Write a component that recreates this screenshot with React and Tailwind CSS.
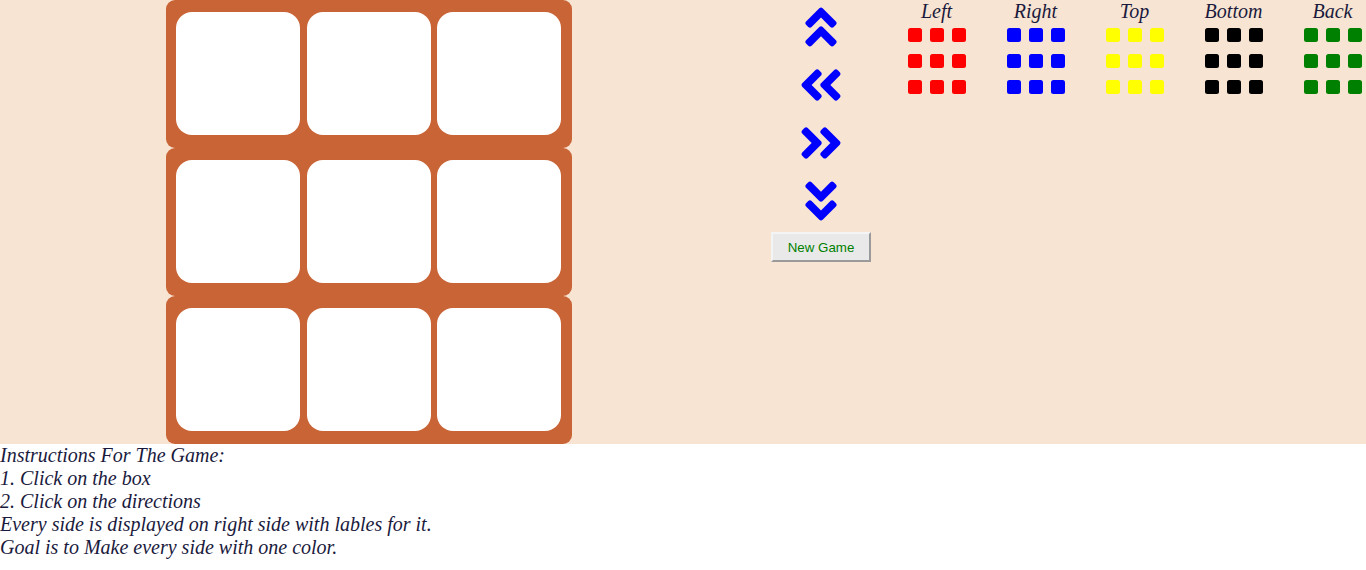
import React from 'react'
import { FaAngleDoubleUp, FaAngleDoubleLeft, FaAngleDoubleRight, FaAngleDoubleDown } from 'react-icons/fa'

const sides = [
  { name: 'Left', color: 'bg-[#ff0000]' },
  { name: 'Right', color: 'bg-[#0000ff]' },
  { name: 'Top', color: 'bg-[#ffff00]' },
  { name: 'Bottom', color: 'bg-[#000000]' },
  { name: 'Back', color: 'bg-[#008000]' },
]

function Row() {
  return (
    <div className="flex h-[148px] w-[406px] items-start gap-[6.5px] rounded-[9px] bg-[#c96436] pl-[10px] pt-[12px]">
      {[0, 1, 2].map((i) => (
        <div key={i} className="h-[123px] w-[124px] rounded-[16px] bg-white" />
      ))}
    </div>
  )
}

function Side({ side }) {
  return (
    <div className="flex w-[99px] flex-col items-center">
      <div className="h-[23px] text-[20px] leading-[23px] italic">{side.name}</div>
      <div className="mt-[5px] grid grid-cols-3 gap-x-[8px] gap-y-[12px]">
        {Array.from({ length: 9 }).map((_, i) => (
          <div key={i} className={`h-[14px] w-[14px] rounded-[2.5px] ${side.color}`} />
        ))}
      </div>
    </div>
  )
}

export default function App() {
  const arrows = [FaAngleDoubleUp, FaAngleDoubleLeft, FaAngleDoubleRight, FaAngleDoubleDown]
  return (
    <div className="min-h-[570px] bg-white font-['Liberation_Serif',serif] text-[#1a1a3d]">
      <div className="flex h-[444px] bg-[#f8e4d2]">
        <div className="ml-[166px] flex flex-col">
          <Row />
          <Row />
          <Row />
        </div>
        <div className="ml-[199px] flex w-[100px] flex-col items-center">
          {arrows.map((Icon, i) => (
            <div key={i} className="flex h-[58px] items-start justify-center pt-[2px]">
              <Icon size={50} color="#0000ff" />
            </div>
          ))}
          <button className="h-[30px] w-[100px] border-2 border-t-[#f4f4f4] border-l-[#f4f4f4] border-r-[#9a9a9a] border-b-[#9a9a9a] bg-[#e9e9e9] pt-px font-['Liberation_Sans',sans-serif] text-[13.33px] text-[#008000]">
            New Game
          </button>
        </div>
        <div className="ml-[16px] flex">
          {sides.map((s) => (
            <Side key={s.name} side={s} />
          ))}
        </div>
      </div>
      <div className="text-[20px] leading-[23px] italic">
        <div>Instructions For The Game:</div>
        <div>1. Click on the box</div>
        <div>2. Click on the directions</div>
        <div>Every side is displayed on right side with lables for it.</div>
        <div>Goal is to Make every side with one color.</div>
      </div>
    </div>
  )
}
